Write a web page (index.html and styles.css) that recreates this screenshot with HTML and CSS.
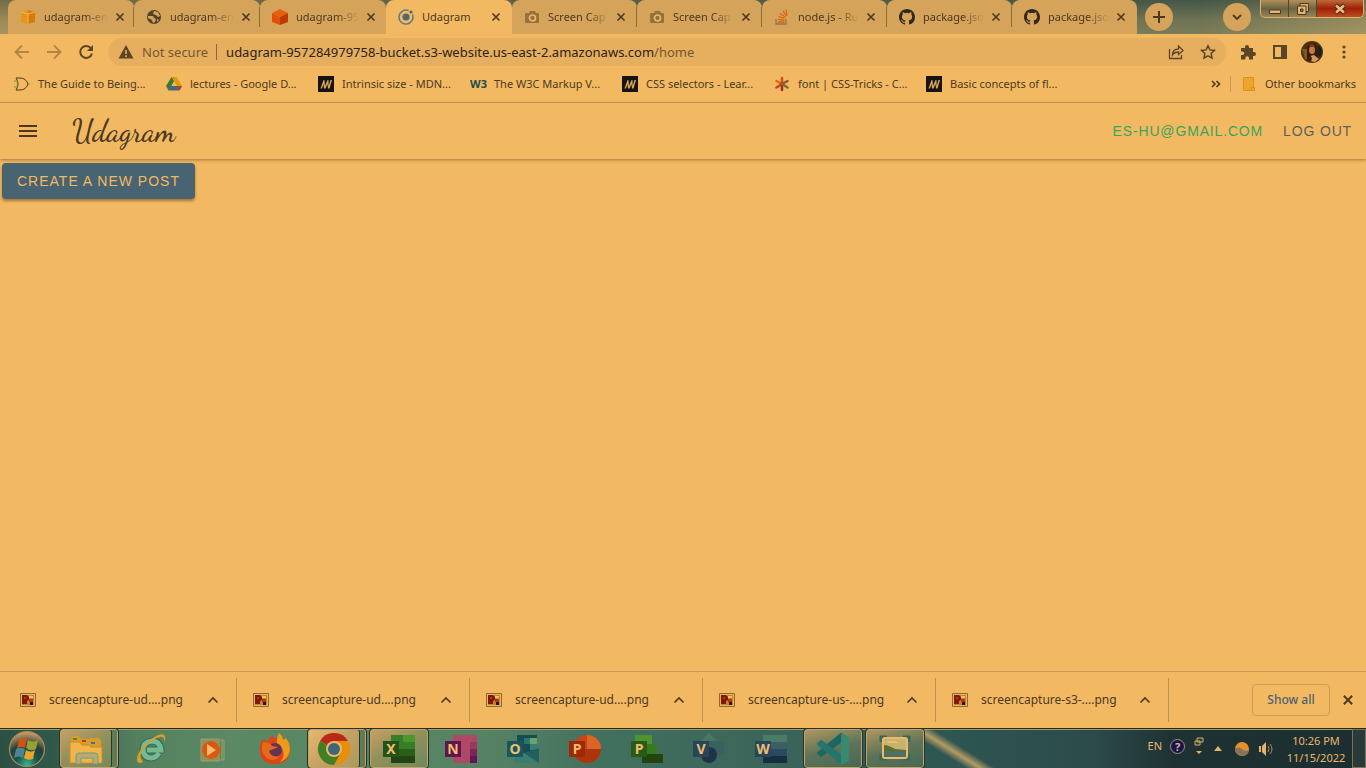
FILE: index.html
```html
<!DOCTYPE html>
<html lang="en">
<head>
<meta charset="utf-8">
<title>Udagram</title>
<link rel="stylesheet" href="styles.css">
</head>
<body>
<svg class="defs" aria-hidden="true">
  <symbol id="close" viewBox="0 0 10 10"><path d="M1.500 1.500l7 7M8.500 1.500l-7 7" fill="none" stroke="currentColor" stroke-width="1.600"/></symbol>
  <symbol id="up" viewBox="0 0 12 12"><path d="M1.500 8.500L6 4l4.500 4.500" fill="none" stroke="currentColor" stroke-width="1.600"/></symbol>
  <symbol id="camera" viewBox="0 0 16 16"><path d="M2 4h3l1-2h5l1 2h2q1 0 1 1v8q0 1-1 1H2q-1 0-1-1V5q0-1 1-1z" fill="#96713b"/><circle cx="8.500" cy="9" r="3" fill="none" stroke="#e9b768" stroke-width="1.700"/></symbol>
  <symbol id="github" viewBox="0 0 16 16"><path fill="#30291e" d="M8 0C3.580 0 0 3.580 0 8c0 3.540 2.290 6.530 5.470 7.590.4.070.550-.170.550-.380 0-.190-.010-.820-.010-1.490-2.010.370-2.530-.490-2.690-.940-.090-.230-.480-.940-.820-1.130-.280-.150-.680-.520-.010-.530.630-.010 1.080.580 1.230.820.720 1.210 1.870.870 2.330.660.070-.520.280-.870.510-1.070-1.780-.2-3.640-.890-3.640-3.950 0-.870.310-1.590.820-2.150-.080-.2-.360-1.020.080-2.120 0 0 .670-.210 2.200.820a7.600 7.600 0 014 0c1.530-1.040 2.200-.820 2.200-.820.440 1.100.160 1.920.080 2.120.510.560.820 1.270.820 2.150 0 3.070-1.870 3.750-3.650 3.950.290.250.540.730.540 1.480 0 1.070-.010 1.930-.010 2.200 0 .210.150.460.550.380A8 8 0 0016 8c0-4.420-3.580-8-8-8z"/></symbol>
  <symbol id="mdn" viewBox="0 0 16 16"><path d="M0 0h16v16H0z" fill="#17130f"/><path d="M2.500 12.500L5.500 4h1l.5 6L9.500 4h1l.2 6L12.500 4H14l-2.500 8.500H10L9.500 8l-2 4.500H6L5.500 8 4 12.500z" fill="#d8a65d"/></symbol>
  <symbol id="picture" viewBox="0 0 16 14"><path d="M.5.5h15v13H.5z" fill="#e8b461" stroke="#8b693b"/><path d="M2 2h12v10H2z" fill="#c98225"/><path d="M2 2h5l2 2v3l-2 1v3H2z" fill="#801b0b"/><path d="M4 4h2v2H4zM9 6h4v3H9z" fill="#b33a10"/><path d="M10 9h3v3h-3z" fill="#251407"/><path d="M9 3h4v2H9z" fill="#f1c265"/></symbol>
</svg>

<header class="tabstrip">
  <nav class="tabs" aria-label="Tabs">
    <div class="tab"><svg class="icon" viewBox="0 0 16 16"><path d="M1 3l7-2v14l-7-2z" fill="#e89419"/><path d="M8 1l7 2v10l-7 2z" fill="#d57c08"/><path d="M1 3l7 2 7-2M8 5v10" stroke="#f1b45a" fill="none"/></svg><span class="tab-title">udagram-en</span><button class="close" aria-label="Close tab"><svg><use href="#close"/></svg></button></div>
    <div class="tab"><svg class="icon" viewBox="0 0 16 16"><circle cx="8" cy="8" r="7" fill="#514329"/><path d="M2 7h5l1 2 2 1-1 3-2 1-1-3-4-2zM8 2l-1 3 3 1 2 2 2-1-2-4zM11 10l2 1-2 2z" fill="#d6a35c"/></svg><span class="tab-title">udagram-en</span><button class="close" aria-label="Close tab"><svg><use href="#close"/></svg></button></div>
    <div class="tab"><svg class="icon" viewBox="0 0 16 16"><path d="M0 4l8-4 8 4-8 4z" fill="#e8610a"/><path d="M0 4l8 4v8l-8-3z" fill="#df5205"/><path d="M16 4L8 8v8l8-3z" fill="#bd3b02"/></svg><span class="tab-title">udagram-95</span><button class="close" aria-label="Close tab"><svg><use href="#close"/></svg></button></div>
    <div class="tab active"><svg class="icon" viewBox="0 0 16 16"><path d="M10.500 1.500A7 7 0 1014.500 5.500" fill="none" stroke="#607a7e" stroke-width="1.500"/><circle cx="8" cy="8" r="3.600" fill="#4c6974"/><circle cx="13" cy="3" r="1.600" fill="#4c6974"/></svg><span class="tab-title">Udagram</span><button class="close" aria-label="Close tab"><svg><use href="#close"/></svg></button></div>
    <div class="tab"><svg class="icon"><use href="#camera"/></svg><span class="tab-title">Screen Cap</span><button class="close" aria-label="Close tab"><svg><use href="#close"/></svg></button></div>
    <div class="tab"><svg class="icon"><use href="#camera"/></svg><span class="tab-title">Screen Cap</span><button class="close" aria-label="Close tab"><svg><use href="#close"/></svg></button></div>
    <div class="tab"><svg class="icon" viewBox="0 0 16 16"><path d="M2 10v5h10v-5" fill="none" stroke="#98743e" stroke-width="1.300"/><path d="M4 13h6.500M4 10.500l6.500.7M4.500 7.500l6.200 1.900M6 4.500l5.500 3.500M9 2l3.500 5M12 .5l1 6" stroke="#d9650f" stroke-width="1.300"/></svg><span class="tab-title">node.js - Ru</span><button class="close" aria-label="Close tab"><svg><use href="#close"/></svg></button></div>
    <div class="tab"><svg class="icon"><use href="#github"/></svg><span class="tab-title">package.jso</span><button class="close" aria-label="Close tab"><svg><use href="#close"/></svg></button></div>
    <div class="tab"><svg class="icon"><use href="#github"/></svg><span class="tab-title">package.jso</span><button class="close" aria-label="Close tab"><svg><use href="#close"/></svg></button></div>
  </nav>
  <button class="round" aria-label="New tab"><svg viewBox="0 0 12 12"><path d="M6 0v12M0 6h12" stroke="currentColor" stroke-width="2"/></svg></button>
  <button class="round search" aria-label="Search tabs"><svg viewBox="0 0 12 12"><path d="M2 4l4 4 4-4" fill="none" stroke="currentColor" stroke-width="1.800"/></svg></button>
  <div class="window-controls">
    <button aria-label="Minimize"><svg viewBox="0 0 14 12"><path d="M1.500 7h11v3.500h-11z" fill="#e2b575" stroke="#4d3a20"/></svg></button>
    <button aria-label="Restore"><svg viewBox="0 0 14 12"><path d="M4 .5h8.500v8H4z" fill="#dcae6c" stroke="#4d3a20"/><path d="M1.500 3h8.500v8.500H1.500z" fill="#e2b575" stroke="#4d3a20"/><path d="M4.500 6h2.500v2.500H4.500z" fill="#8a6d3f" stroke="#4d3a20"/></svg></button>
    <button class="win-close" aria-label="Close"><svg viewBox="0 0 14 12"><path d="M2.500 2l9 8M11.500 2l-9 8" stroke="#4d2a1a" stroke-width="4.500"/><path d="M3 2.500l8 7M11 2.500l-8 7" stroke="#e8bd80" stroke-width="2.500"/></svg></button>
  </div>
</header>

<div class="toolbar">
  <button class="tool faded" aria-label="Back"><svg viewBox="0 0 16 16"><path d="M15 8H2M8 1.500L1.500 8 8 14.500" fill="none" stroke="currentColor" stroke-width="1.800"/></svg></button>
  <button class="tool faded" aria-label="Forward"><svg viewBox="0 0 16 16"><path d="M1 8h13M8 1.500L14.500 8 8 14.500" fill="none" stroke="currentColor" stroke-width="1.800"/></svg></button>
  <button class="tool" aria-label="Reload"><svg viewBox="0 0 16 16"><path d="M13 4.300A6 6 0 1014 9.500" fill="none" stroke="currentColor" stroke-width="2"/><path d="M15 1v6H9z" fill="currentColor"/></svg></button>
  <div class="omnibox">
    <svg class="icon" viewBox="0 0 16 16"><path d="M8 1l7.500 13.500H.5z" fill="#5a4627"/><path d="M8 6v4M8 11.300v1.800" stroke="#e6af5f" stroke-width="1.600"/></svg>
    <span class="insecure">Not secure</span>
    <a class="url" href="#home">udagram-957284979758-bucket.s3-website.us-east-2.amazonaws.com<span>/home</span></a>
    <button class="tool" aria-label="Share"><svg viewBox="0 0 16 16"><path d="M1.500 5v9.500h12V11M4.500 11c0-4 2-6 6-6V2l4.500 4.500-4.500 4V8C8 8 6 8.500 4.500 11z" fill="none" stroke="currentColor" stroke-width="1.300"/></svg></button>
    <button class="tool" aria-label="Bookmark"><svg viewBox="0 0 16 16"><path d="M8 1.700l1.900 4.200 4.600.5-3.400 3.100.9 4.600L8 11.800l-4 2.300.9-4.600L1.500 6.400l4.600-.5z" fill="none" stroke="currentColor" stroke-width="1.500"/></svg></button>
  </div>
  <button class="tool" aria-label="Extensions"><svg viewBox="0 0 16 16"><path d="M1 4h4V3a2 2 0 014 0v1h4v4h1a2 2 0 010 4h-1v3.500H9V14a1.800 1.800 0 00-3.600 0v1.500H1V11h1.500a1.800 1.800 0 000-3.600H1z" fill="currentColor"/></svg></button>
  <button class="tool" aria-label="Side panel"><svg viewBox="0 0 16 16"><path d="M2 2h12v12H2z" fill="none" stroke="currentColor" stroke-width="2"/><path d="M9 2h5v12H9z" fill="currentColor"/></svg></button>
  <button class="tool avatar" aria-label="Profile"><svg viewBox="0 0 22 22"><circle cx="11" cy="11" r="11" fill="#463414"/><path d="M1 8h6v10H4z" fill="#7b5a1a"/><path d="M17 4l4 4-1 8-4-2z" fill="#172318"/><path d="M6 19V9q0-7 5-7 6 0 5 7l2 10-7 2z" fill="#3e170b"/><ellipse cx="11" cy="9" rx="3" ry="4" fill="#bd7d3c"/><path d="M7 5q4-5 7 0l-3 1z" fill="#7e3412"/><path d="M8 20l1-5 4-1 5 4-4 3z" fill="#d39b5c"/><path d="M9 14l2 3-1 4-4-2z" fill="#43200f"/></svg></button>
  <button class="tool" aria-label="Menu"><svg viewBox="0 0 16 16"><g fill="currentColor"><circle cx="8" cy="3" r="1.600"/><circle cx="8" cy="8" r="1.600"/><circle cx="8" cy="13" r="1.600"/></g></svg></button>
</div>

<nav class="bookmarks" aria-label="Bookmarks">
  <a href="#b1"><svg class="icon" viewBox="0 0 16 16"><path d="M2 2h4q6 0 8 6-2 6-8 6H2q4-6 0-12z" fill="none" stroke="#4b3b1f"/><path d="M0 5h4M0 11h4M14 8h2" stroke="#709b29"/></svg><span>The Guide to Being...</span></a>
  <a href="#b2"><svg class="icon" viewBox="0 0 16 16"><path d="M5.500 1h5L5 11l-2.500 3.500L0 10z" fill="#397b35"/><path d="M5.500 1h5L16 10h-5z" fill="#e59808"/><path d="M5 10h11l-2.500 4.500h-11z" fill="#48677e"/><path d="M11 10h5l-2.500 4.500z" fill="#c63a15"/><path d="M8 5.500l2.500 4.500h-5z" fill="#f3b962"/></svg><span>lectures - Google D...</span></a>
  <a href="#b3"><svg class="icon"><use href="#mdn"/></svg><span>Intrinsic size - MDN...</span></a>
  <a href="#b4"><b class="icon w3">W3</b><span>The W3C Markup V...</span></a>
  <a href="#b5"><svg class="icon"><use href="#mdn"/></svg><span>CSS selectors - Lear...</span></a>
  <a href="#b6"><svg class="icon" viewBox="0 0 16 16"><g stroke-width="2.500" stroke-linecap="round"><path d="M8 8V2" stroke="#d94c15"/><path d="M8 8L2.500 5" stroke="#dc6517"/><path d="M8 8l-5.500 3.500" stroke="#c6421f"/><path d="M8 8v6" stroke="#a92c24"/><path d="M8 8l5.500-3" stroke="#8c5a28"/><path d="M8 8l5.500 3.500" stroke="#7a6940"/></g></svg><span>font | CSS-Tricks - C...</span></a>
  <a href="#b7"><svg class="icon"><use href="#mdn"/></svg><span>Basic concepts of fl...</span></a>
  <button class="more" aria-label="More bookmarks"><svg viewBox="0 0 12 12"><path d="M2 3l3 3-3 3M6.500 3l3 3-3 3" fill="none" stroke="currentColor" stroke-width="1.600"/></svg></button>
  <a class="other" href="#other"><svg class="icon" viewBox="0 0 16 16"><path d="M2.500 1.500h10v10h1v3h-11z" fill="#eda62d" stroke="#db9215"/><path d="M10.500 14.500v-3h2" fill="none" stroke="#db9215"/></svg><span>Other bookmarks</span></a>
</nav>

<header class="app-bar">
  <button class="hamburger" aria-label="Open menu"><svg viewBox="0 0 18 12"><path d="M0 1h18M0 6h18M0 11h18" stroke="currentColor" stroke-width="2"/></svg></button>
  <a class="brand" href="#home">Udagram</a>
  <a class="account" href="#account">es-hu@gmail.com</a>
  <button class="logout">Log out</button>
</header>
<main class="page"><button class="create">Create a new post</button></main>

<section class="downloads" aria-label="Downloads">
  <div class="download"><svg class="thumb"><use href="#picture"/></svg><span>screencapture-ud....png</span><button aria-label="Options"><svg><use href="#up"/></svg></button></div>
  <div class="download"><svg class="thumb"><use href="#picture"/></svg><span>screencapture-ud....png</span><button aria-label="Options"><svg><use href="#up"/></svg></button></div>
  <div class="download"><svg class="thumb"><use href="#picture"/></svg><span>screencapture-ud....png</span><button aria-label="Options"><svg><use href="#up"/></svg></button></div>
  <div class="download"><svg class="thumb"><use href="#picture"/></svg><span>screencapture-us-....png</span><button aria-label="Options"><svg><use href="#up"/></svg></button></div>
  <div class="download"><svg class="thumb"><use href="#picture"/></svg><span>screencapture-s3-....png</span><button aria-label="Options"><svg><use href="#up"/></svg></button></div>
  <button class="show-all">Show all</button>
  <button class="dismiss" aria-label="Close downloads"><svg><use href="#close"/></svg></button>
</section>

<footer class="taskbar">
  <button class="start" aria-label="Start"><svg viewBox="0 0 38 38"><defs><radialGradient id="orb" cx=".5" cy=".95" r=".9"><stop offset="0" stop-color="#39b58b"/><stop offset=".35" stop-color="#1c5550"/><stop offset=".65" stop-color="#243f38"/><stop offset="1" stop-color="#c39762"/></radialGradient></defs><circle cx="19" cy="19" r="17.500" fill="url(#orb)" stroke="#a68b5b" stroke-width="1.200"/><path d="M11 10q4-3 8-1l-2 9q-4-2-8 0z" fill="#d35119"/><path d="M20 10q5 3 10 0l-2 9q-5 3-10-1z" fill="#93a333"/><path d="M8 19q4-3 9 0l-2 9q-4-3-9 0z" fill="#4c8493"/><path d="M18 20q5 3 9 0l-2 9q-5 2-9-1z" fill="#e7a62a"/></svg></button>
  <button class="task running stack" aria-label="File Explorer"><svg viewBox="0 0 34 32"><path d="M2 6q0-3 3-3h5l2 3h8l2-1h8l2 3v22H2z" fill="#dc9b2a"/><path d="M4 5h4v2H4z" fill="#3e983a"/><path d="M13 7h4v2h-4z" fill="#b04418"/><path d="M22 9h4v2h-4z" fill="#307c89"/><path d="M1 9h9l3 3h7l2 2h11v16H1z" fill="#efb44a" stroke="#cf8a20"/><path d="M7 31v-8q0-3 3-3h16q3 0 3 3v8h-5v-6H12v6z" fill="#bba96e" stroke="#6f9a86"/></svg></button>
  <button class="task" aria-label="Internet Explorer"><svg viewBox="0 0 34 32"><path d="M25 20q-3 5-8 5-7 0-8-8 0-8 9-9 8 0 9 9H13" fill="none" stroke="#2f6f64" stroke-width="7"/><path d="M25 20q-3 5-8 5-7 0-8-8 0-8 9-9 8 0 9 9H13" fill="none" stroke="#78b98e" stroke-width="5"/><path d="M9 29C1 33 1 23 9 14S30-3 31 4q1 2-1 5 1-6-4-5-7 1-15 10T9 29z" fill="#e49c1e"/></svg></button>
  <button class="task" aria-label="Media Player"><svg viewBox="0 0 34 32"><path d="M10 7h18v20H10z" fill="#5c885e" stroke="#a79b62"/><path d="M26 7v20" stroke="#a79b62"/><path d="M5 6h18v22H5z" fill="#8b9460" stroke="#a79b62"/><circle cx="15" cy="17" r="9" fill="#db570d"/><path d="M11 11l9 6-9 6z" fill="#efbd75"/></svg></button>
  <button class="task" aria-label="Firefox"><svg viewBox="0 0 34 32"><path d="M3 9l3-3q2 3 4 2 2-5 5-6 0 3 3 4Q20 3 21 0q4 3 4 7l3-2q5 7 4 14Q30 31 17 31 4 31 2 20q-1-5 1-11z" fill="#df431a"/><path d="M21 0q4 3 4 7l3-2q6 8 3 16-3 6-9 8 5-5 3-11-1-5-6-7-1-6 2-11z" fill="#eb9b19"/><circle cx="17" cy="17" r="7" fill="#633356"/><path d="M5 9q7 0 9 4l6 1q-4 2-5 2l-4 2q2 7 11 5-8 8-15 0-5-6-2-14z" fill="#e36a17"/></svg></button>
  <button class="task running stack current" aria-label="Chrome"><svg viewBox="0 0 34 32"><path d="M17 16L3.100 8A16 16 0 0130.900 8z" fill="#b82a15"/><path d="M17 16L3.100 8A16 16 0 0017 32l7-12z" fill="#407f24"/><path d="M17 16l13.900-8A16 16 0 0117 32l7-12z" fill="#e79005"/><path d="M17 8h13.900A16 16 0 0133 16H17z" fill="#e79005"/><circle cx="17" cy="16" r="8" fill="#efb667"/><circle cx="17" cy="16" r="6" fill="#3f6578"/></svg></button>
  <button class="task running" aria-label="Excel"><svg viewBox="0 0 34 32"><path d="M9 2h24v28H9z" fill="#285f1b"/><path d="M9 2h12v14H9z" fill="#377e27"/><path d="M21 2h12v7H21z" fill="#4c982d"/><path d="M21 9h12v7H21z" fill="#377e27"/><path d="M9 23h24v7H9z" fill="#244413"/><path d="M1 8h16v16H1z" fill="#245319"/></svg><b class="app-letter">X</b></button>
  <button class="task" aria-label="OneNote"><svg viewBox="0 0 34 32"><path d="M9 2h24v28H9z" fill="#ad4967"/><path d="M26 9h7v7h-7z" fill="#983a5f"/><path d="M26 16h7v7h-7z" fill="#7a2756"/><path d="M26 23h7v7h-7z" fill="#621653"/><path d="M1 8h16v16H1z" fill="#5f164e"/></svg><b class="app-letter">N</b></button>
  <button class="task" aria-label="Outlook"><svg viewBox="0 0 34 32"><path d="M11 2h20v18H11z" fill="#174d50"/><path d="M18 5h6v6h-6z" fill="#29776f"/><path d="M24 5h7v6h-7z" fill="#68a36f"/><path d="M24 11h7v6h-7z" fill="#317f75"/><path d="M9 15l12 7 12-7v15H9z" fill="#397e70"/><path d="M33 15v15L18 20z" fill="#245f60"/><path d="M1 8h16v16H1z" fill="#18585d"/></svg><b class="app-letter">O</b></button>
  <button class="task" aria-label="PowerPoint"><svg viewBox="0 0 34 32"><circle cx="19" cy="16" r="14" fill="#c74616"/><path d="M19 2a14 14 0 0114 14H19z" fill="#da6524"/><path d="M5 16h28a14 14 0 01-28 0z" fill="#ac350b"/><path d="M1 8h16v16H1z" fill="#9f2807"/></svg><b class="app-letter">P</b></button>
  <button class="task" aria-label="Project"><svg viewBox="0 0 34 32"><path d="M5 2h17v9H5z" fill="#4d942d"/><path d="M12 11h15v10H12z" fill="#377923"/><path d="M12 21h21v9H12z" fill="#24450f"/><path d="M1 8h16v16H1z" fill="#275b16"/></svg><b class="app-letter">P</b></button>
  <button class="task" aria-label="Visio"><svg viewBox="0 0 34 32"><path d="M17 0l8 8-8 9-8-9z" fill="#467763"/><path d="M17 8h15v14H17z" fill="#3a6060"/><circle cx="17" cy="22" r="8" fill="#1d3546"/><path d="M1 8h16v16H1z" fill="#28465a"/></svg><b class="app-letter">V</b></button>
  <button class="task" aria-label="Word"><svg viewBox="0 0 34 32"><path d="M9 2h24v7H9z" fill="#4b7c68"/><path d="M9 9h24v7H9z" fill="#3a5f64"/><path d="M9 16h24v7H9z" fill="#2b4960"/><path d="M9 23h24v7H9z" fill="#192f40"/><path d="M1 8h16v16H1z" fill="#28465a"/></svg><b class="app-letter">W</b></button>
  <button class="task running" aria-label="Visual Studio Code"><svg viewBox="0 0 34 32"><path d="M2 20l3 3L26 8V0z" fill="#1f6660" stroke="#1f6660" stroke-linejoin="round" stroke-width="2"/><path d="M2 11l3-3 21 15v8z" fill="#25756e" stroke="#25756e" stroke-linejoin="round" stroke-width="2"/><path d="M25 0l8 4v24l-8 4z" fill="#378a70"/></svg></button>
  <button class="task running" aria-label="Photo viewer"><svg viewBox="0 0 34 32"><path d="M3 9V4h6M25 4h6v5M3 21v5h6M25 26h6v-5" fill="none" stroke="#386854" stroke-width="3"/><rect x="5" y="5" width="24" height="20" rx="2" fill="#c7b36e" stroke="#eab96b" stroke-width="2"/><path d="M6 12q4 0 11 4l11 1v2H6z" fill="#59702f"/><path d="M6 18h22v6H6z" fill="#4d7062"/><path d="M8 8h9l4 2H10z" fill="#e5c176"/></svg></button>
  <div class="tray">
    <span class="lang">EN</span>
    <span class="help">?</span>
    <svg class="options" viewBox="0 0 10 18"><path d="M3 1h6v4H3zM1 4h5v4H1z" fill="#263d3b" stroke="#d9ad6b"/><path d="M2 14h6l-3 3z" fill="#e5b166"/></svg>
    <svg class="expand" viewBox="0 0 8 5"><path d="M0 5h8L4 0z" fill="#e5b166"/></svg>
    <svg class="icon" viewBox="0 0 16 16"><circle cx="8" cy="8" r="7" fill="#e6902b"/><path d="M1 8q4-3 7 0t7 1q-1 6-7 6-6-1-7-7z" fill="#85745c"/></svg>
    <svg class="icon" viewBox="0 0 16 16"><path d="M1 5h2v6H1zM4 5l4-4v14l-4-4z" fill="#e5b166"/><path d="M10 5q2 3 0 6M12 3q4 5 0 10" fill="none" stroke="#b58d56"/></svg>
    <time class="clock" datetime="2022-11-15T22:26">10:26 PM<br>11/15/2022</time>
  </div>
  <button class="desktop" aria-label="Show desktop"></button>
</footer>
</body>
</html>
```
FILE: styles.css
```css
:root {
  --base: #f3b962;
  --tab: #d6a35b;
  --field: #e6af5f;
  --ink: #4a391f;
  --line: #cb9c58;
  --blue: #486371;
}
* { box-sizing: border-box; }
body {
  display: flex;
  flex-direction: column;
  min-height: 100vh;
  margin: 0;
  background: var(--base);
  color: var(--ink);
  font: 12px/16px "Segoe UI", "Noto Sans", "Open Sans", sans-serif;
}
button {
  display: flex;
  align-items: center;
  justify-content: center;
  flex: none;
  padding: 0;
  border: 0;
  background: none;
  color: inherit;
  font: inherit;
}
a { color: inherit; text-decoration: none; }
svg { flex: none; }
.defs { display: none; }
.icon { flex: none; width: 16px; height: 16px; }

.tabstrip {
  display: flex;
  align-items: center;
  height: 34px;
  padding: 0 2px 0 8px;
  background: linear-gradient(180deg, #49584580, #a1926280 60%, #b7a36a80), linear-gradient(90deg, #97834f, #4a5b4a 60%, #3d5547 88%, #8d8557);
}
.tabs { display: flex; flex: 0 1 1129px; align-self: stretch; min-width: 0; }
.tab {
  display: flex;
  align-items: center;
  flex: 0 1 125px;
  min-width: 0;
  padding: 0 8px 0 12px;
  border-radius: 8px 8px 0 0;
  background: linear-gradient(#8c6b3d, #8c6b3d) right center / 1px 20px no-repeat var(--tab);
}
.tab:nth-child(-n+4) { flex-basis: 126px; }
.tab.active { background: var(--base); }
.tab:has(+ .active), .tab:last-child { background: var(--tab); }
.tab-title {
  flex: 1;
  margin-left: 8px;
  white-space: nowrap;
  font-size: 11px;
  mask-image: linear-gradient(90deg, #000 65%, transparent);
}
.active .tab-title { mask-image: none; }
.close { width: 16px; height: 16px; margin-left: 4px; }
.close svg { width: 10px; height: 10px; }
.round { width: 28px; height: 28px; margin-left: 8px; border-radius: 50%; background: var(--tab); }
.round svg { width: 12px; height: 12px; }
.search { margin-left: auto; }
.window-controls {
  display: flex;
  align-self: flex-start;
  height: 18px;
  margin-left: 9px;
  border: 1px solid #e0b373;
  border-top: 0;
  border-radius: 0 0 5px 5px;
  overflow: hidden;
  background: linear-gradient(#b08f5a, #6c6543 50%, #9a8452);
}
.window-controls button { width: 28px; border-right: 1px solid #52452c; }
.window-controls svg { width: 14px; height: 12px; }
.window-controls .win-close { width: 46px; border: 0; background: linear-gradient(#bd6a37, #a01f08 50%, #bb4e1d); }

.toolbar { display: flex; align-items: center; height: 36px; padding: 0 6px; }
.tool { width: 32px; height: 28px; color: #5a4627; }
.tool svg { width: 16px; height: 16px; }
.faded { color: #b38545; }
.avatar svg { width: 22px; height: 22px; }
.omnibox {
  display: flex;
  align-items: center;
  flex: 1;
  min-width: 0;
  height: 28px;
  margin: 0 6px;
  padding: 0 2px 0 10px;
  border-radius: 14px;
  background: var(--field);
  font-size: 13px;
}
.insecure { margin-left: 8px; padding-right: 8px; border-right: 1px solid #87683a; color: #74582f; }
.url { flex: 1; min-width: 0; margin-left: 9px; overflow: hidden; white-space: nowrap; color: #2c2214; }
.url span { color: #74582f; }

.bookmarks {
  display: flex;
  align-items: center;
  height: 33px;
  padding: 0 10px 4px 14px;
  border-bottom: 1px solid var(--line);
  font-size: 11px;
  white-space: nowrap;
}
.bookmarks a { display: flex; flex: 0 1 152px; gap: 8px; }
.w3 { color: #244c49; font-size: 11px; }
.bookmarks .more { width: 16px; height: 16px; margin-left: auto; }
.more svg { width: 12px; height: 12px; }
.bookmarks .other { flex: none; margin-left: 6px; padding-left: 10px; border-left: 1px solid var(--line); }

.app-bar {
  display: flex;
  align-items: center;
  height: 56px;
  padding: 0 14px 0 19px;
  box-shadow: 0 1px 3px #6c491a99;
  font: 14px/20px "Liberation Sans", sans-serif;
}
.hamburger svg { width: 18px; height: 12px; }
.brand { margin-left: 35px; font: 500 30px/40px "Dancing Script", "Liberation Serif", cursive; }
.account, .logout { letter-spacing: .06em; text-transform: uppercase; }
.account { margin-left: auto; color: #39a45d; }
.logout { margin-left: 20px; color: #5b625b; }
.page { flex: 1; padding: 4px 2px; font: 14px/20px "Liberation Sans", sans-serif; }
.create {
  height: 36px;
  padding: 0 15px;
  border-radius: 4px;
  background: var(--blue);
  color: var(--base);
  box-shadow: 0 2px 3px #6c491a99;
  letter-spacing: 1px;
  text-transform: uppercase;
}

.downloads {
  display: flex;
  align-items: center;
  height: 57px;
  padding: 0 10px 0 4px;
  border-top: 1px solid var(--line);
}
.download { display: flex; align-items: center; flex: 0 1 233px; min-width: 0; height: 44px; padding: 0 15px 0 16px; border-right: 1px solid #bd9252; }
.thumb { width: 16px; height: 14px; }
.download span { margin-left: 13px; white-space: nowrap; }
.download button { width: 16px; height: 16px; margin-left: auto; }
.download button svg { width: 12px; height: 12px; }
.show-all { width: 78px; height: 32px; margin-left: auto; border: 1px solid var(--line); border-radius: 4px; color: var(--blue); font-weight: 500; }
.dismiss { width: 16px; height: 16px; margin-left: 10px; }
.dismiss svg { width: 12px; height: 12px; }

.taskbar {
  display: flex;
  gap: 4px;
  height: 40px;
  border-top: 1px solid #202b1b;
  box-shadow: inset 0 1px #ad9860;
  background:
    linear-gradient(32deg, transparent 42%, #b39b63 50%, transparent 58%) 890px 0 / 120px 40px no-repeat,
    linear-gradient(90deg, #2c5144, #31594a 4%, #55805e 10%, #5a8964 17%, #568263 36%, #42705e 44%, #3a6359 58%, #2d5551 70%, #2c4b4a 80%, #1e3133 86%, #1c2e30);
}
.start { width: 56px; }
.start svg { width: 38px; height: 38px; margin-right: 2px; }
.task { position: relative; width: 58px; }
.task > svg { width: 34px; height: 32px; }
.running { border: 1px solid #c6a267; border-radius: 3px; outline: 1px solid #24342a; background: linear-gradient(150deg, #c7a063, #93905c 45%, #6c8a5f); }
.running:nth-last-child(-n+4) { background: linear-gradient(165deg, #b0975f, #5f7459 50%, #456956); }
.stack { padding-right: 6px; box-shadow: inset -5px 0 #607c56, inset -6px 0 #28372a; }
.current { background: linear-gradient(135deg, #e7b86f, #c3a064 50%, #a49a60); }
.app-letter { position: absolute; top: 12px; left: 13px; width: 16px; color: #f1bd6c; font-size: 14px; line-height: 16px; text-align: center; }
.running .app-letter { top: 11px; left: 12px; }
.tray { display: flex; align-items: center; margin-left: auto; color: #e8b76f; font-size: 11px; }
.lang, .help, .options { margin-bottom: 5px; }
.lang { margin-right: 8px; }
.help { width: 15px; height: 15px; border-radius: 50%; background: #15164f; border: 1px solid #a79172; line-height: 13px; font-weight: 700; text-align: center; }
.options { width: 10px; height: 18px; margin-left: 9px; }
.expand { width: 8px; height: 5px; margin-left: 10px; margin-right: 12px; }
.tray .icon + .icon { margin-left: 8px; }
.clock { width: 64px; margin-left: 10px; line-height: 17px; text-align: center; }
.desktop { width: 14px; border: 1px solid #85714f; background: #263b3a; }
```
